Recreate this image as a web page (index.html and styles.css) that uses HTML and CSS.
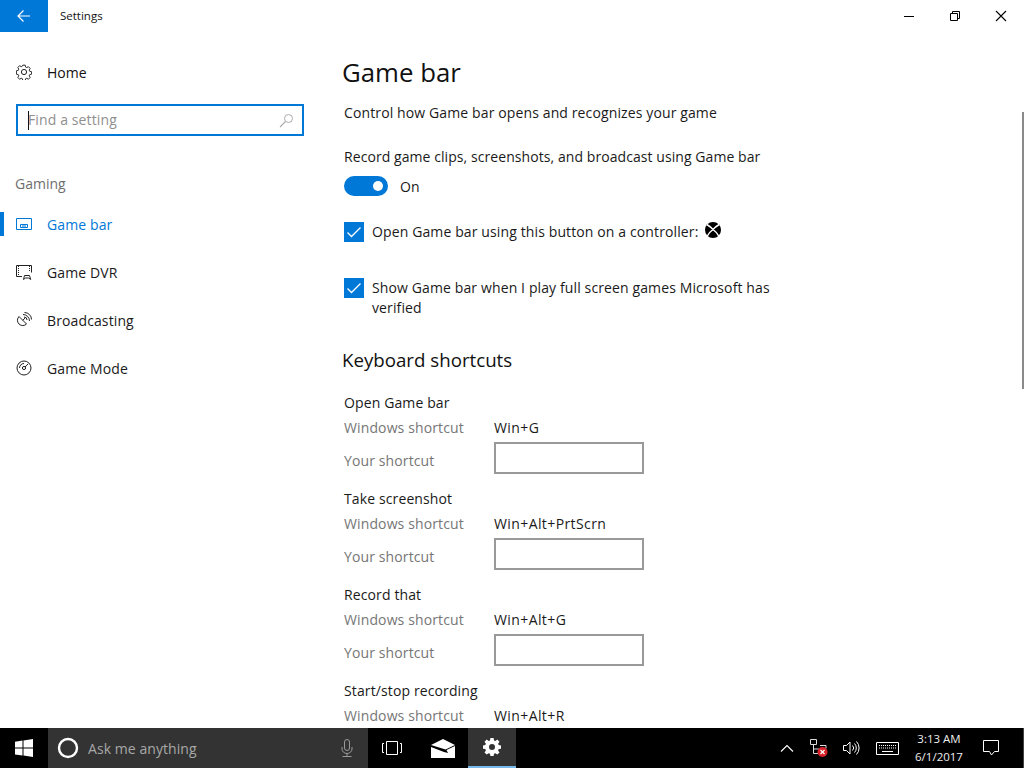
FILE: index.html
```html
<!DOCTYPE html>
<html lang="en">
<head>
<meta charset="utf-8">
<title>Settings</title>
<link rel="stylesheet" href="styles.css">
</head>
<body>
<div class="window">
  <header class="titlebar">
    <div class="back"><svg width="16" height="16" viewBox="0 0 16 16"><path d="M14 8H2.500M7.500 2.500 2 8l5.500 5.500" fill="none" stroke="#fff" stroke-width="1.200"/></svg></div>
    <div class="apptitle">Settings</div>
    <div class="winctl">
      <svg width="46" height="32" viewBox="0 0 46 32"><path d="M18 16.500h10" stroke="#000" stroke-width="1"/></svg>
      <svg width="46" height="32" viewBox="0 0 46 32"><path d="M18.500 13.500h7v7h-7zM20.500 13.500v-2h7v7h-2" fill="none" stroke="#000"/></svg>
      <svg width="46" height="32" viewBox="0 0 46 32"><path d="M18 11l10 10M28 11 18 21" stroke="#000" stroke-width="1.100"/></svg>
    </div>
  </header>
  <div class="body">
    <aside class="nav">
      <div class="home">
        <svg class="navicon" viewBox="0 0 16 16"><path d="M6.700.8h2.600l.4 2 1.200.6 1.800-1 1.800 1.900-1 1.700.5 1.200 2 .5v2.600l-2 .5-.5 1.200 1 1.700-1.800 1.900-1.800-1-1.200.5-.4 2H6.700l-.4-2-1.200-.5-1.800 1-1.800-1.900 1-1.700-.5-1.200-2-.5V6.700l2-.5.5-1.200-1-1.700 1.800-1.900 1.800 1 1.200-.6z" transform="translate(.4 .4) scale(.95)" fill="none" stroke="#222"/><circle cx="8" cy="8" r="2.600" fill="none" stroke="#222"/></svg>
        <span>Home</span>
      </div>
      <div class="search">
        <span class="caret"></span><span class="ph">Find a setting</span>
        <svg class="mag" width="15" height="15" viewBox="0 0 15 15"><circle cx="9.500" cy="5.500" r="4" fill="none" stroke="#aaa"/><path d="M6.500 8.500 1 14" stroke="#aaa" stroke-width="1.100"/></svg>
      </div>
      <div class="navhead">Gaming</div>
      <div class="navitem active">
        <svg class="navicon" viewBox="0 0 16 16"><path d="M.5 2.500h15v11H.5z" fill="none" stroke="#0078d7"/><path d="M4.500 8.500h7v3h-7z" fill="none" stroke="#0078d7"/><path d="M7 8.500v3M9 8.500v3" stroke="#0078d7"/></svg>
        <span>Game bar</span>
      </div>
      <div class="navitem">
        <svg class="navicon" viewBox="0 0 16 16"><path d="M6 12.500H.5v-11h15v7" fill="none" stroke="#222"/><path d="M2.500 2v9M13.500 2v6" stroke="#222" stroke-dasharray="1 1"/><path d="M7.500 15.500l1-4h5l1.200 4-2-1.500h-3.200z" fill="none" stroke="#222"/></svg>
        <span>Game DVR</span>
      </div>
      <div class="navitem">
        <svg class="navicon" viewBox="0 0 16 16"><path d="M3 4.500 10.500 12A5.300 5.300 0 0 1 3 4.500z" fill="none" stroke="#222"/><path d="M6.800 8.300 9 6M7 2.500a6.500 6.500 0 0 1 6.500 6.500M8.500.5a7 7 0 0 1 7 7M8 5a3 3 0 0 1 3 3" fill="none" stroke="#222"/></svg>
        <span>Broadcasting</span>
      </div>
      <div class="navitem">
        <svg class="navicon" viewBox="0 0 16 16"><circle cx="8" cy="8" r="7" fill="none" stroke="#222"/><path d="M3.500 8A4.500 4.500 0 0 1 8 3.500" fill="none" stroke="#222"/><circle cx="8" cy="8" r="1.600" fill="none" stroke="#222"/><path d="M9 7l3-3" stroke="#222"/></svg>
        <span>Game Mode</span>
      </div>
    </aside>
    <main class="content">
      <h1>Game bar</h1>
      <p class="sub">Control how Game bar opens and recognizes your game</p>
      <p class="rec">Record game clips, screenshots, and broadcast using Game bar</p>
      <div class="toggle-row"><span class="toggle"><span class="knob"></span></span><span>On</span></div>
      <div class="check first">
        <span class="box"><svg width="20" height="20" viewBox="0 0 20 20"><path d="M3.500 10.500 7.500 14.500 16.500 5.500" fill="none" stroke="#fff" stroke-width="1.300"/></svg></span>
        <span>Open Game bar using this button on a controller:</span>
        <svg class="xbox" width="16" height="16" viewBox="0 0 16 16"><circle cx="8" cy="8" r="8" fill="#000"/><path d="M1.800 2.500Q6 5 8 7.500 10 5 14.200 2.500M2.300 14Q4.500 10 8 7.500 11.500 10 13.700 14" fill="none" stroke="#fff" stroke-width="1.500"/></svg>
      </div>
      <div class="check second">
        <span class="box"><svg width="20" height="20" viewBox="0 0 20 20"><path d="M3.500 10.500 7.500 14.500 16.500 5.500" fill="none" stroke="#fff" stroke-width="1.300"/></svg></span>
        <span>Show Game bar when I play full screen games Microsoft has verified</span>
      </div>
      <h2>Keyboard shortcuts</h2>
      <section class="sc">
        <div class="sc-title">Open Game bar</div>
        <div class="sc-row"><span class="lbl">Windows shortcut</span><span class="val">Win+G</span></div>
        <div class="sc-input"><span class="lbl">Your shortcut</span><span class="field"></span></div>
      </section>
      <section class="sc">
        <div class="sc-title">Take screenshot</div>
        <div class="sc-row"><span class="lbl">Windows shortcut</span><span class="val">Win+Alt+PrtScrn</span></div>
        <div class="sc-input"><span class="lbl">Your shortcut</span><span class="field"></span></div>
      </section>
      <section class="sc">
        <div class="sc-title">Record that</div>
        <div class="sc-row"><span class="lbl">Windows shortcut</span><span class="val">Win+Alt+G</span></div>
        <div class="sc-input"><span class="lbl">Your shortcut</span><span class="field"></span></div>
      </section>
      <section class="sc">
        <div class="sc-title">Start/stop recording</div>
        <div class="sc-row"><span class="lbl">Windows shortcut</span><span class="val">Win+Alt+R</span></div>
      </section>
    </main>
    <div class="scrollbar"><div class="thumb"></div></div>
  </div>
  <footer class="taskbar">
    <div class="tb start"><svg width="18" height="18" viewBox="0 0 18 18"><path d="M0 2.700 7.500 1.600v7H0zM8.500 1.500 18 0v8.600H8.500zM0 9.600h7.500v7L0 15.500zM8.500 9.600H18V18l-9.500-1.400z" fill="#fff"/></svg></div>
    <div class="cortana">
      <svg width="22" height="22" viewBox="0 0 22 22"><circle cx="11" cy="11" r="9" fill="none" stroke="#fff" stroke-width="2.400"/></svg>
      <span class="ask">Ask me anything</span>
      <svg class="mic" width="14" height="18" viewBox="0 0 14 18"><rect x="4.500" y=".5" width="5" height="11" rx="2.500" fill="none" stroke="#999"/><path d="M2 8v2a5 4.500 0 0 0 10 0V8M7 14.500v3M2.500 17.500h9" fill="none" stroke="#999"/></svg>
    </div>
    <div class="tb view"><svg width="20" height="16" viewBox="0 0 20 16"><path d="M4.500 1.500h11v13h-11z" fill="none" stroke="#fff"/><path d="M2 3.500H.5v9H2M18 3.500h1.500v9H18" fill="none" stroke="#fff"/></svg></div>
    <div class="tb mail"><svg width="24" height="19" viewBox="0 0 24 19"><path d="M0 6 12 0l12 6-9.500 4.500z" fill="#fff"/><path d="M0 8l13 5 4 1-1.500-3L24 7v12H0z" fill="#fff"/></svg></div>
    <div class="tb settings"><svg width="18" height="18" viewBox="0 0 18 18"><path fill-rule="evenodd" d="M7.400 0h3.200l.4 2.400 1.300.6 2-1.400 2.200 2.200-1.400 2 .6 1.300 2.300.4v3.200l-2.300.4-.6 1.300 1.400 2-2.200 2.200-2-1.400-1.300.6-.4 2.200H7.400L7 15.800l-1.300-.6-2 1.400-2.200-2.200 1.400-2-.6-1.300L0 10.700V7.500l2.300-.4.600-1.300-1.400-2 2.200-2.200 2 1.400L7 2.400zM9 6a3 3 0 1 0 0 6 3 3 0 0 0 0-6z" fill="#fff"/></svg></div>
    <div class="tray">
      <svg class="t-chev" width="14" height="8" viewBox="0 0 14 8"><path d="M1 7.500 7 1.500l6 6" fill="none" stroke="#fff" stroke-width="1.100"/></svg>
      <svg class="t-net" width="18" height="18" viewBox="0 0 18 18"><path d="M.5.500h6v5h-6zM3.500 5.500v9h5M3.500 10h8M10 6.500h6v3" fill="none" stroke="#ddd"/><circle cx="12.500" cy="13" r="5" fill="#d8232a"/><path d="M10.500 11l4 4M14.500 11l-4 4" stroke="#fff" stroke-width="1.200"/></svg>
      <svg class="t-vol" width="17" height="16" viewBox="0 0 17 16"><path d="M.5 5.500h3L7 2v12l-3.500-3.500h-3zM9.500 5.500a3.500 3.500 0 0 1 0 5M11.500 3.500a6.500 6.500 0 0 1 0 9M13.500 1.500a9.500 9.500 0 0 1 0 13" fill="none" stroke="#fff"/></svg>
      <svg class="t-kb" width="23" height="13" viewBox="0 0 23 13"><path d="M.5.500h22v12H.5z" fill="none" stroke="#fff"/><path d="M3 3.500h17M3 6h17" stroke="#fff" stroke-dasharray="1 1"/><path d="M6 9.500h11" stroke="#fff"/></svg>
      <div class="clock"><div>3:13 AM</div><div>6/1/2017</div></div>
      <svg class="t-act" width="16" height="16" viewBox="0 0 16 16"><path d="M.5.500h15v11h-4L8.500 15 6.500 11.500h-6z" fill="none" stroke="#fff"/></svg>
      <span class="peek"></span>
    </div>
  </footer>
</div>
</body>
</html>
```
FILE: styles.css
```css
* { box-sizing: border-box; }
html, body { margin: 0; height: 100%; }
body { font-family: "Open Sans", "Noto Sans", sans-serif; font-size: 14px; letter-spacing: .12px; color: #1a1a1a; background: #fff; overflow: hidden; }
p, h1, h2 { margin: 0; font-weight: 400; }
.window { width: 1024px; height: 768px; display: flex; flex-direction: column; }

.titlebar { height: 32px; display: flex; align-items: center; flex: none; }
.back { width: 48px; height: 32px; background: #0078d7; display: flex; align-items: center; justify-content: center; }
.apptitle { margin-left: 12px; padding-bottom: 2px; font-size: 11.500px; letter-spacing: 0; color: #111; }
.winctl { margin-left: auto; display: flex; }
.winctl svg { display: block; }

.body { flex: 1; display: flex; min-height: 0; overflow: hidden; }
.nav { width: 342px; flex: none; }
.navicon { width: 16px; height: 16px; flex: none; }
.home { display: flex; align-items: center; gap: 15px; padding-left: 16px; margin-top: 31px; height: 18px; color: #111; letter-spacing: 0; }
.search { margin: 23px 0 0 16px; width: 288px; height: 32px; border: 2px solid #0078d7; display: flex; align-items: center; padding: 0 8px 0 10px; }
.caret { width: 1px; height: 19px; background: #111; }
.ph { color: #8f8f8f; margin-left: -1px; padding-bottom: 1px; }
.mag { margin-left: auto; }
.navhead { margin: 38px 0 0 15px; color: #6e6e6e; height: 20px; line-height: 20px; letter-spacing: 0; }
.navitem { display: flex; align-items: center; gap: 15px; height: 24px; margin-top: 24px; padding-left: 16px; color: #1a1a1a; }
.navhead + .navitem { margin-top: 18px; }
.navitem.active { color: #0078d7; border-left: 4px solid #0078d7; padding-left: 12px; }

.content { flex: 1; min-width: 0; overflow: hidden; }
.content > * { margin-left: 2px; }
.content > h1, .content > h2 { margin-left: 0; letter-spacing: 0; }
h1 { font-size: 25.800px; line-height: 34px; margin-top: 23px; color: #111; }
.sub { margin-top: 14px; line-height: 20px; }
.rec { margin-top: 24px; line-height: 20px; letter-spacing: .07px; }
.toggle-row { display: flex; align-items: center; gap: 12px; margin-top: 9px; height: 20px; }
.toggle { width: 44px; height: 20px; border-radius: 10px; background: #0078d7; display: flex; align-items: center; justify-content: flex-end; padding-right: 5px; }
.knob { width: 10px; height: 10px; border-radius: 50%; background: #fff; }
.check { display: flex; align-items: flex-start; gap: 8px; width: 440px; line-height: 20px; }
.check.first { margin-top: 26px; }
.check.second { margin-top: 36px; }
.box { width: 20px; height: 20px; background: #0078d7; flex: none; display: block; }
.box svg { display: block; }
.xbox { flex: none; margin-left: -1px; }
h2 { font-size: 18.700px; line-height: 26px; margin-top: 29px; color: #111; }
.sc { margin-top: 20px; }
.sc + .sc { margin-top: 15px; }
.sc-title { height: 20px; line-height: 20px; }
.sc-row, .sc-input { display: flex; }
.sc-row { height: 20px; line-height: 20px; margin-top: 5px; }
.sc-input { height: 32px; margin-top: 4px; }
.lbl { width: 150px; color: #767676; flex: none; }
.val { letter-spacing: .4px; }
.sc-input .lbl { line-height: 20px; margin-top: 9px; }
.field { width: 150px; height: 32px; border: 2px solid #999; display: block; }

.scrollbar { width: 8px; flex: none; position: relative; }
.thumb { position: absolute; top: 80px; left: 6px; width: 2px; height: 277px; background: #8a8a8a; }

.taskbar { height: 40px; flex: none; background: #000; display: flex; align-items: stretch; color: #fff; }
.tb { display: flex; align-items: center; justify-content: center; height: 40px; }
.start { width: 48px; }
.cortana { width: 320px; background: #333; display: flex; align-items: center; padding-left: 9px; gap: 9px; }
.ask { color: #a8a8a8; font-size: 14px; letter-spacing: .06px; }
.mic { margin-left: auto; margin-right: 14px; }
.view { width: 48px; }
.mail { width: 52px; padding-left: 2px; }
.settings { width: 48px; background: #333; border-bottom: 2px solid #76b9ed; }
.tray { margin-left: auto; display: flex; align-items: center; position: relative; padding-right: 25px; }
.t-chev { margin-right: 16px; }
.t-net { margin-right: 15px; }
.t-vol { margin-right: 16px; }
.t-kb { margin-right: 9px; }
.clock { font-size: 11.500px; letter-spacing: 0; line-height: 18px; text-align: center; color: #eee; width: 62px; margin-right: 13px; }
.peek { position: absolute; right: 0; top: 0; height: 40px; width: 1px; background: #444; }
```
